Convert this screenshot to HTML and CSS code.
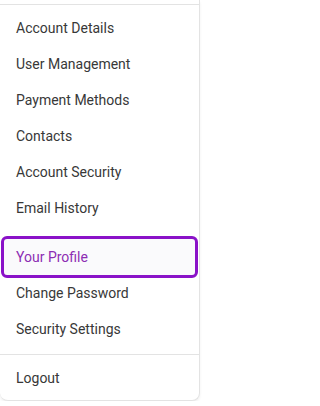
FILE: index.html
```html
<!DOCTYPE html>
<html>
<head>
<meta charset="utf-8">
<link rel="stylesheet" href="styles.css">
</head>
<body>
<nav class="menu">
  <div class="divider top"></div>
  <ul class="group first">
    <li class="item">Account Details</li>
    <li class="item">User Management</li>
    <li class="item">Payment Methods</li>
    <li class="item">Contacts</li>
    <li class="item">Account Security</li>
    <li class="item">Email History</li>
  </ul>
  <ul class="group second">
    <li class="item active">Your Profile</li>
    <li class="item">Change Password</li>
    <li class="item">Security Settings</li>
  </ul>
  <div class="divider"></div>
  <ul class="group last">
    <li class="item">Logout</li>
  </ul>
</nav>
</body>
</html>
```
FILE: styles.css
```css
html, body {
  margin: 0;
  padding: 0;
  background: #ffffff;
}
body {
  font-family: Roboto, "Liberation Sans", sans-serif;
  font-size: 14px;
  color: #383838;
}
.menu {
  width: 199px;
  background: #ffffff;
  border-right: 1px solid #e3e3e3;
  border-bottom: 1px solid #e3e3e3;
  border-radius: 0 0 8px 8px;
  box-shadow: 0 2px 3px rgba(0,0,0,0.06);
  padding-top: 4px;
  padding-bottom: 4px;
}
.divider {
  height: 1px;
  background: #e3e3e3;
}
.group {
  list-style: none;
  margin: 0;
  padding: 0;
}
.group.first {
  padding-top: 5px;
}
.group.second {
  padding-top: 13px;
  padding-bottom: 7px;
}
.group.last {
  padding-top: 5px;
}
.item {
  height: 36px;
  line-height: 36px;
  padding-left: 16px;
  white-space: nowrap;
}
.item.active {
  margin: 0 4px 0 4px;
  padding-left: 12px;
  outline: 3px solid #8a12c8;
  border-radius: 3px;
  background: #fafafc;
  color: #8d2db3;
}
```
